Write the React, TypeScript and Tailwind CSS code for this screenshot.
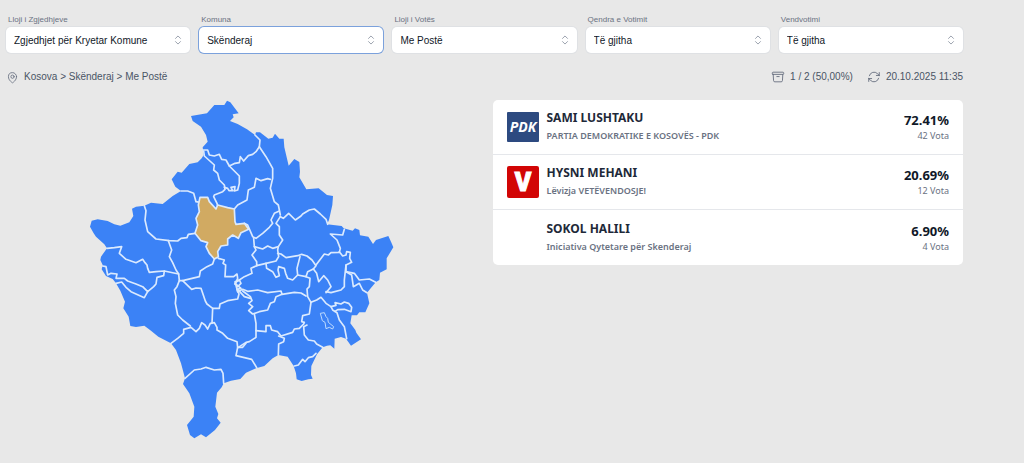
import { useState } from "react"

type Filter = {
  id: string
  label: string
  options: string[]
}

type Candidate = {
  name: string
  party: string
  percent: string
  votes: number
  logo?: "pdk" | "vv"
}

const filters: Filter[] = [
  { id: "election", label: "Lloji i Zgjedhjeve", options: ["Zgjedhjet për Kryetar Komune", "Zgjedhjet për Kuvend Komunal"] },
  { id: "municipality", label: "Komuna", options: ["Skënderaj", "Prishtinë", "Prizren", "Pejë"] },
  { id: "voteType", label: "Lloji i Votës", options: ["Me Postë", "Të gjitha"] },
  { id: "center", label: "Qendra e Votimit", options: ["Të gjitha"] },
  { id: "station", label: "Vendvotimi", options: ["Të gjitha"] },
]

const candidates: Candidate[] = [
  { name: "SAMI LUSHTAKU", party: "PARTIA DEMOKRATIKE E KOSOVËS - PDK", percent: "72.41%", votes: 42, logo: "pdk" },
  { name: "HYSNI MEHANI", party: "Lëvizja VETËVENDOSJE!", percent: "20.69%", votes: 12, logo: "vv" },
  { name: "SOKOL HALILI", party: "Iniciativa Qytetare për Skenderaj", percent: "6.90%", votes: 4 },
]

const countryOutline =
  "M330 78L378 70 400 45 430 45 438 32 448 37 473 70 455 73 458 82 447 93 470 102 498 118 522 135 525 127 537 127 562 146 575 143 582 131 595 146 608 146 610 172 623 227 640 207 655 216 657 245 655 262 676 298 713 295 738 315 756 318 754 345 744 390 738 403 782 408 788 415 815 422 822 415 835 420 837 436 862 440 876 462 885 450 922 438 930 455 937 472 917 505 917 538 897 548 895 570 884 577 858 608 865 640 853 667 835 667 828 676 812 676 808 700 823 720 826 728 840 748 810 767 795 746 780 741 761 746 760 776 748 766 738 767 725 772 708 793 691 828 690 855 695 866 682 868 662 873 647 868 645 850 638 828 620 800 592 795 575 805 550 828 525 835 495 848 478 867 450 872 428 880 422 892 408 908 403 950 412 972 408 985 419 998 402 1020 375 1042 360 1033 340 1045 327 1035 318 1005 338 980 340 950 325 910 306 882 312 865 300 820 285 780 270 760 232 740 210 722 190 707 165 711 148 708 143 680 127 655 132 635 118 602 105 580 95 567 75 558 62 538 65 525 58 510 60 500 78 475 70 463 45 440 38 430 27 410 32 392 50 388 80 393 100 403 118 407 145 397 157 378 153 356 165 350 190 347 210 338 245 342 275 318 300 303 283 290 272 268 290 245 302 248 325 222 350 217 362 205 368 195 365 172 380 155 375 135 360 110 335 93Z"

const skenderaj =
  "M357 322L380 322 385 335 405 357 410 345 440 353 460 357 462 395 465 403 490 400 503 418 480 428 472 445 455 435 440 447 440 465 420 468 410 485 412 500 400 507 385 490 375 470 380 458 360 452 342 430 350 405 345 385 355 365 352 345Z"

const borders = [
  "M365 180L380 180 385 195 400 198 415 193 422 208 435 210 445 228 462 220 475 218 478 200 488 213 502 197 515 193 525 185 535 170 537 150 522 135",
  "M368 183L370 198 400 225 398 240 410 250 415 270 430 285 432 298 425 305 400 315 398 320 408 340 410 347",
  "M445 228L475 258 475 280 470 300 460 303 462 290 450 292 455 302 444 302 440 295 430 292",
  "M300 303L320 303 338 310 345 335 356 337",
  "M460 357L470 345 498 330 502 300 520 292 525 265 540 272 560 266 568 268",
  "M535 170L555 200 575 235 575 265 568 295 580 335 592 345 598 375",
  "M598 380L607 385 623 370 643 390 660 378 665 372 685 360 700 357 718 372 735 388 740 403",
  "M595 363L580 370 570 390 575 400 565 412 545 430 525 445 515 440 500 405 490 400",
  "M598 380L585 400 595 410 595 435 605 450 592 470 575 475 560 468 545 477 520 470 518 445",
  "M520 470L525 480 513 495 527 515 527 527 555 520 585 513 593 500 590 480 592 470",
  "M527 527L510 535 513 550 490 560 475 570 463 578 470 605",
  "M555 520L557 535 575 545 585 562 595 557 591 540 593 530 610 535 614 550 620 565 635 570 650 555 648 535 657 500",
  "M590 490L600 492 615 503 650 497 662 493 678 498 693 510 705 527 697 537 680 545 675 560 650 555",
  "M705 525L730 492 742 495 750 488 775 487 778 475 768 450 748 432 785 435 790 418",
  "M775 485L785 498 795 495 797 485 808 487 806 505 812 517 795 525 795 545 820 550 835 570 865 567 884 577",
  "M795 545L812 555 817 590 835 580 845 600 858 608",
  "M795 525L790 570 790 590 780 600 750 608 735 605",
  "M697 537L707 550 713 575 728 557 740 570 750 590 735 608",
  "M675 560L687 565 685 590 678 597 680 620 690 637",
  "M470 605L485 598 500 604 530 600 560 608 600 603 603 613 640 607 660 609 675 618",
  "M603 613L585 620 580 635 568 640 560 660 535 665 515 672 503 662 515 650 503 640 513 632 508 620 485 603",
  "M520 672L525 700 525 742 505 755 495 757 472 772",
  "M525 722L555 725 555 707 568 707 572 720 590 725 600 738 635 727 640 717 655 715 668 702 670 697 662 695 665 677 685 672 690 637",
  "M593 738L610 745 608 755 593 762 592 795",
  "M678 705L668 710 670 735 682 750 700 753 707 762 725 772",
  "M640 828L652 825 665 808 672 815 682 803 695 800 705 790",
  "M690 637L707 630 720 622 735 640 750 650 755 660 768 668 775 690 790 710 797 746",
  "M750 650L765 646 762 638 780 642 790 636 803 640 812 652 810 665 790 658 770 659 762 664",
  "M270 760L290 745 308 730 308 718 330 712 345 725 355 715 362 698 372 705 380 717 388 700 400 698 408 712 408 720 425 730 440 745 468 755 470 772 485 772 495 760",
  "M470 772L465 797 512 808 527 833",
  "M312 865L340 840 360 837 375 832 400 840 420 838 426 850 428 880",
  "M328 708L305 690 290 675 283 640 285 620 280 600 288 590 295 572",
  "M393 700L395 655 378 642 373 633 360 595 345 594 332 598 305 572 355 560 358 543 378 530 395 522 400 507",
  "M395 655L415 655 417 642 440 632 470 627 474 612 468 598 480 595 462 580",
  "M462 583L470 565 468 552 458 560 432 560 434 525 426 520 430 510 412 505",
  "M462 575L475 570 480 580 470 590M470 598L490 620 508 625",
  "M190 347L195 362 192 390 200 425 225 447 265 452 290 453 300 445 318 443 322 433 342 430",
  "M262 452L272 480 265 500 275 518 285 540 293 552 295 572 305 572",
  "M78 475L100 473 122 470 115 490 135 508 165 518 185 508 192 518 198 525 200 535 205 547 225 545 250 543 293 552",
  "M250 543L248 557 228 562 225 582 218 590 200 605 185 590 165 582 140 573 130 565 105 565 108 552 90 550 80 555 75 530 65 528",
  "M105 580L122 576 135 592 150 605 190 623 200 605",
]

const lakeOutline = "M718 670L730 668 735 680 740 685 742 697 758 710 755 717 745 712 735 716 732 697 724 692Z"

function SelectorIcon() {
  return (
    <svg viewBox="0 0 12 16" className="pointer-events-none absolute right-2 top-1/2 h-2.5 w-2 -translate-y-1/2" fill="none" stroke="#9ca3af" strokeWidth="1.6" strokeLinecap="round" strokeLinejoin="round">
      <path d="M2 5.5L6 1.5L10 5.5M2 10.5L6 14.5L10 10.5" />
    </svg>
  )
}

function PinIcon() {
  return (
    <svg viewBox="0 0 24 24" className="size-[13px] text-gray-500" fill="none" stroke="currentColor" strokeWidth="1.6" strokeLinecap="round" strokeLinejoin="round">
      <path d="M15 10.5a3 3 0 1 1-6 0 3 3 0 0 1 6 0Z" />
      <path d="M19.5 10.5c0 7.142-7.5 11.25-7.5 11.25S4.5 17.642 4.5 10.5a7.5 7.5 0 1 1 15 0Z" />
    </svg>
  )
}

function ArchiveIcon() {
  return (
    <svg viewBox="0 0 24 24" className="size-3.5 text-gray-500" fill="none" stroke="currentColor" strokeWidth="1.6" strokeLinecap="round" strokeLinejoin="round">
      <path d="m20.25 7.5-.625 10.632a2.25 2.25 0 0 1-2.247 2.118H6.622a2.25 2.25 0 0 1-2.247-2.118L3.75 7.5M10 11.25h4M3.375 7.5h17.25c.621 0 1.125-.504 1.125-1.125v-1.5c0-.621-.504-1.125-1.125-1.125H3.375c-.621 0-1.125.504-1.125 1.125v1.5c0 .621.504 1.125 1.125 1.125Z" />
    </svg>
  )
}

function RefreshIcon() {
  return (
    <svg viewBox="0 0 24 24" className="size-3.5 text-gray-500" fill="none" stroke="currentColor" strokeWidth="1.6" strokeLinecap="round" strokeLinejoin="round">
      <path d="M16.023 9.348h4.992v-.001M2.985 19.644v-4.992m0 0h4.992m-4.993 0 3.181 3.183a8.25 8.25 0 0 0 13.803-3.7M4.031 9.865a8.25 8.25 0 0 1 13.803-3.7l3.181 3.182m0-4.991v4.99" />
    </svg>
  )
}

function PartyLogo({ logo }: { logo?: "pdk" | "vv" }) {
  if (logo === "pdk") {
    return (
      <svg viewBox="0 0 32 30" className="w-8 shrink-0" role="img" aria-label="PDK">
        <rect width="32" height="30" rx="1" fill="#2d4a80" />
        <text x="16" y="20" textAnchor="middle" fontSize="14" fontWeight="700" fontStyle="italic" fill="#fff" fontFamily="Open Sans, sans-serif">
          PDK
        </text>
      </svg>
    )
  }
  if (logo === "vv") {
    return (
      <svg viewBox="0 0 32 32" className="w-8 shrink-0" role="img" aria-label="Vetëvendosje">
        <rect width="32" height="32" rx="2" fill="#d20505" />
        <text x="16" y="25" textAnchor="middle" fontSize="25" fontWeight="900" fill="#fff" stroke="#fff" strokeWidth="1" fontFamily="Roboto, sans-serif">
          V
        </text>
      </svg>
    )
  }
  return <div className="w-8 shrink-0" />
}

function FilterSelect({ filter, active, onFocus }: { filter: Filter; active: boolean; onFocus: () => void }) {
  const [value, setValue] = useState(filter.options[0])

  return (
    <div>
      <label htmlFor={filter.id} className="block pl-0.5 text-[8px] leading-3 text-gray-500">
        {filter.label}
      </label>
      <div className="relative mt-px">
        <select
          id={filter.id}
          value={value}
          onFocus={onFocus}
          onChange={(e) => setValue(e.target.value)}
          className={`block h-[26px] w-full appearance-none rounded-[5px] bg-white pl-2 pr-6 text-[10px] text-gray-900 outline-none ring-1 ${
            active ? "ring-[#7ba1dc]" : "ring-[#dfe1e4]"
          }`}
        >
          {filter.options.map((option) => (
            <option key={option}>{option}</option>
          ))}
        </select>
        <SelectorIcon />
      </div>
    </div>
  )
}

function KosovoMap() {
  return (
    <svg viewBox="0 30 960 1020" className="w-80" role="img" aria-label="Kosova">
      <path d={countryOutline} fill="#3b82f6" />
      <g fill="none" stroke="#dbeafe" strokeWidth="5" strokeLinejoin="round" strokeLinecap="round">
        {borders.map((d) => (
          <path key={d} d={d} />
        ))}
      </g>
      <path d={skenderaj} fill="#d1aa62" stroke="#dbeafe" strokeWidth="5" strokeLinejoin="round" />
      <path d={lakeOutline} fill="none" stroke="#bfdbfe" strokeWidth="3" />
    </svg>
  )
}

function CandidateRow({ candidate }: { candidate: Candidate }) {
  return (
    <li className="flex h-[55px] items-center gap-2 px-3.5">
      <PartyLogo logo={candidate.logo} />
      <div className="min-w-0 flex-1">
        <h3 className="text-[12px] font-bold leading-[18px] text-gray-800">{candidate.name}</h3>
        <p className="text-[9px] font-semibold leading-[18px] text-gray-500">{candidate.party}</p>
      </div>
      <div className="pt-0.5 text-right">
        <p className="text-[13px] font-bold leading-4 text-gray-900">{candidate.percent}</p>
        <p className="text-[9px] leading-4 text-gray-500">{candidate.votes} Vota</p>
      </div>
    </li>
  )
}

export default function App() {
  const [activeFilter, setActiveFilter] = useState("municipality")

  return (
    <main className="min-h-screen bg-[#e8e8e8] pb-4 pl-1.5 pr-[61px] pt-3.5 font-['Liberation_Sans',Arial,sans-serif]">
      {/* Filters */}
      <div className="grid grid-cols-5 gap-[9px]">
        {filters.map((filter) => (
          <FilterSelect
            key={filter.id}
            filter={filter}
            active={activeFilter === filter.id}
            onFocus={() => setActiveFilter(filter.id)}
          />
        ))}
      </div>

      {/* Current selection and counting status */}
      <div className="mt-4 flex items-center justify-between text-[10px] leading-4 text-gray-600">
        <div className="flex items-center gap-[5px]">
          <PinIcon />
          <span>Kosova &gt; Skënderaj &gt; Me Postë</span>
        </div>
        <div className="flex items-center gap-3.5">
          <div className="flex items-center gap-[5px]">
            <ArchiveIcon />
            <span>1 / 2 (50,00%)</span>
          </div>
          <div className="flex items-center gap-[5px]">
            <RefreshIcon />
            <span>20.10.2025 11:35</span>
          </div>
        </div>
      </div>

      {/* Map and results */}
      <div className="mt-[15px] grid grid-cols-2 items-start gap-4">
        <div className="flex justify-center">
          <KosovoMap />
        </div>
        <ul className="divide-y divide-gray-200 rounded-[5px] bg-white font-['Noto_Sans',sans-serif]">
          {candidates.map((candidate) => (
            <CandidateRow key={candidate.name} candidate={candidate} />
          ))}
        </ul>
      </div>
    </main>
  )
}
